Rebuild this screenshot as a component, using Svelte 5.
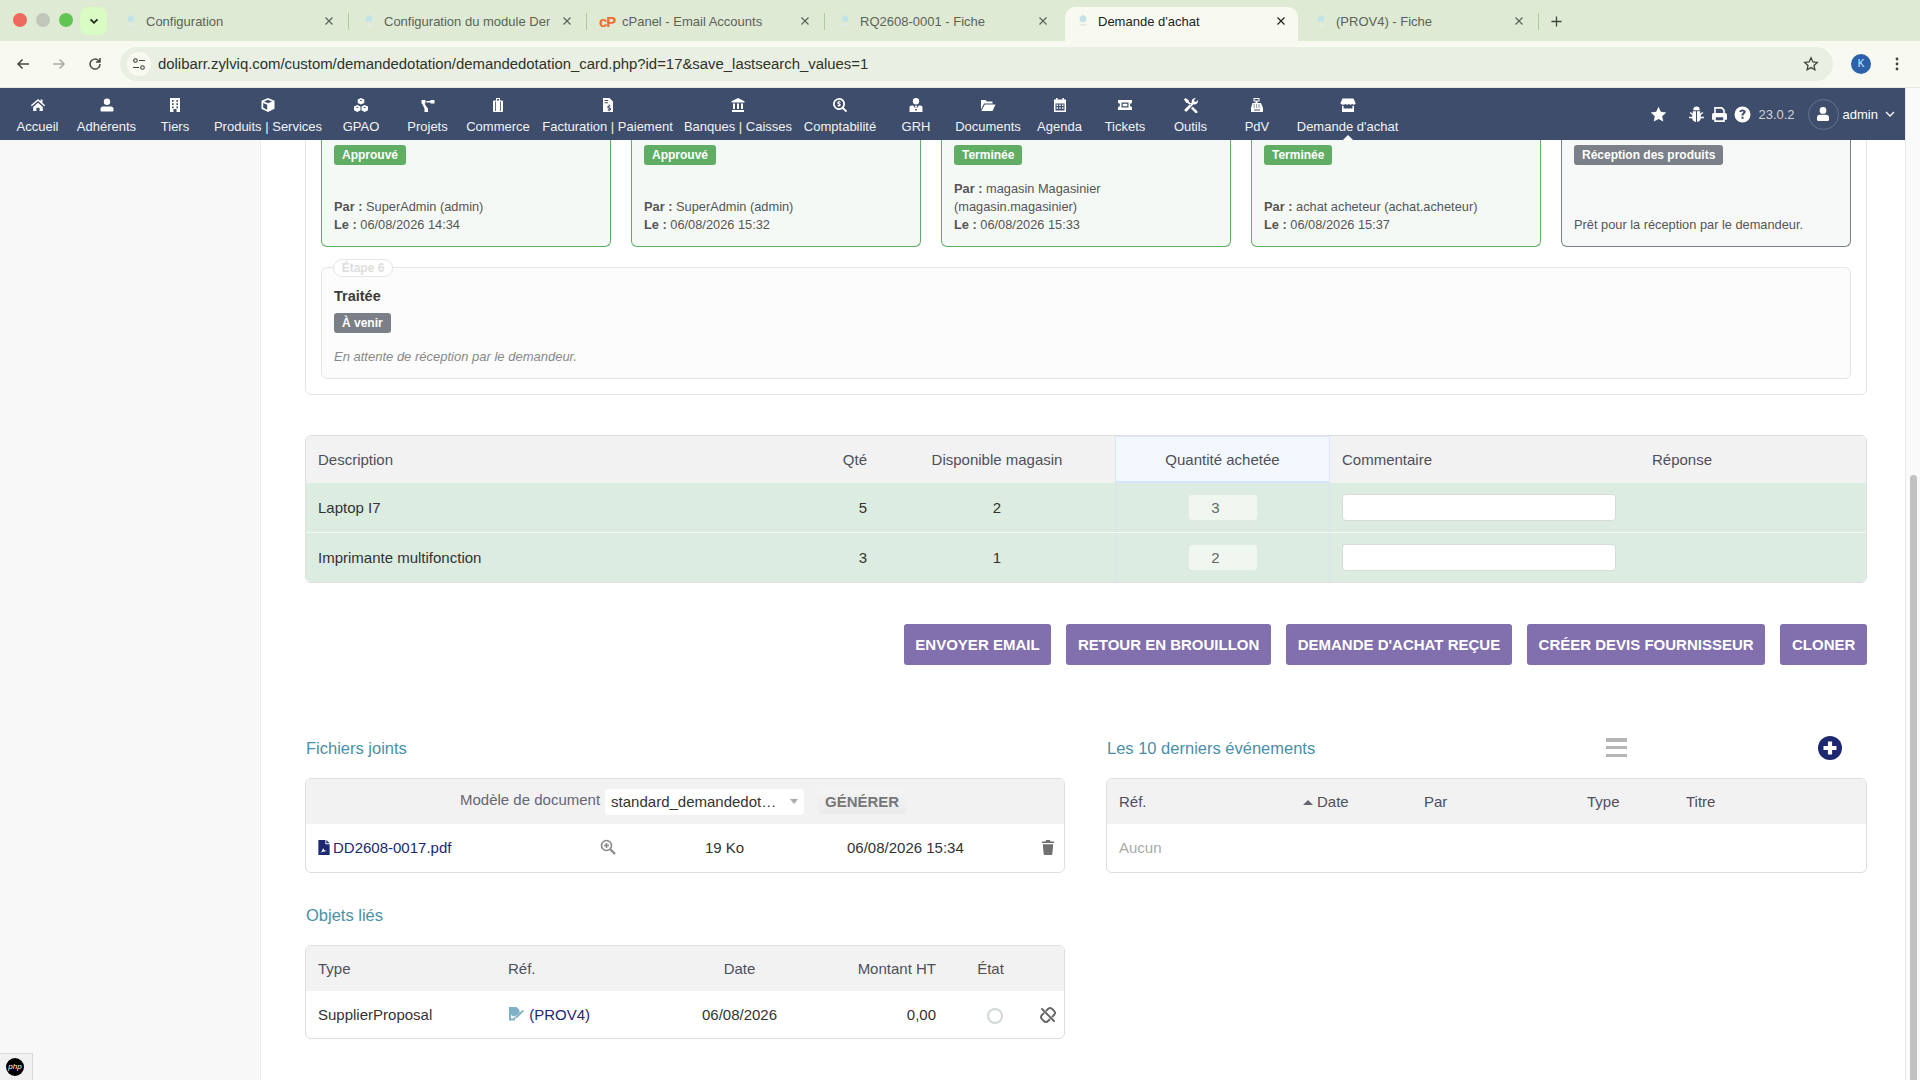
<script>
const tabs = [
    { title: 'Configuration' },
    { title: 'Configuration du module Dem' },
    { title: 'cPanel - Email Accounts', cp: true },
    { title: 'RQ2608-0001 - Fiche', nosep: true },
    { title: "Demande d'achat", active: true, nosep: true },
    { title: '(PROV4) - Fiche' }
];

const menu = [
    { label: 'Accueil', d: 'M8 2 .8 8.200l1 1.100L8 4l6.200 5.300 1-1.100-2.700-2.300V2.600h-2v1.600zM3.200 9.900 8 5.700l4.800 4.200V14H9.600v-3.200H6.400V14H3.200z' },
    { label: 'Adhérents', d: 'M8 1.600a3.200 3.200 0 1 1 0 6.400 3.200 3.200 0 0 1 0-6.400zM3.800 9.400h8.400c1.300 0 2.300 1 2.300 2.300v1.800c0 .5-.4.900-.9.900H2.400a.9.900 0 0 1-.9-.9v-1.800c0-1.300 1-2.300 2.300-2.300z' },
    { label: 'Tiers', d: 'M3 1h10v14H9.500v-3h-3v3H3zM5 3v1.800h1.600V3zm4.400 0v1.800H11V3zM5 6.200V8h1.600V6.200zm4.400 0V8H11V6.200zM5 9.400v1.800h1.600V9.400zm4.400 0v1.800H11V9.400z' },
    { label: 'Produits | Services', d: 'M8 1l6.500 2.800v8L8 15l-6.500-3.200v-8zM8 2.800 4 4.500 8 6.200l4-1.700zM3.200 6v4.800l4 2V7.700z' },
    { label: 'GPAO', d: 'M8 1l3.300 1.500v3.600L8 7.600 4.700 6.100V2.500zM4.300 8 7.500 9.500v3.700L4.300 15 1 13.200V9.500zm7.400 0L15 9.500v3.700L11.700 15l-3.200-1.800V9.500zM8 2.700 6.500 3.400 8 4.100l1.500-.7zM4.300 9.700l-1.500.7 1.500.7 1.500-.7zm7.400 0-1.500.7 1.500.7 1.500-.7z' },
    { label: 'Projets', d: 'M1.500 3h4v3.500h-1l2.800 4.500h.7V15h-3.500v-3.500l-2.500-5h-.5zM10.500 3h4v3.500h-4V5.500h-4V4h4z' },
    { label: 'Commerce', d: 'M6 1h4v2.500h2.200c.5 0 .8.300.8.800v9.900c0 .5-.3.800-.8.800H3.800c-.5 0-.8-.3-.8-.8V4.300c0-.5.3-.8.8-.8H6zm1 1v1.500h2V2zM5 4.500V14h.8V4.500zm5.200 0V14h.8V4.500z' },
    { label: 'Facturation | Paiement', d: 'M3 1h6.500L13 4.500V15H3zm1.500 2v1H8V3zm0 2.200v1H8v-1zM8.800 7.500v1c-1 .2-1.500.8-1.500 1.600 0 1.700 2.500 1.300 2.500 2 0 .4-.9.4-2 0v1.200c.3.100.6.200 1 .2v.8h.9v-.9c.9-.2 1.400-.8 1.400-1.500 0-1.800-2.500-1.300-2.500-2 0-.4.800-.4 1.800-.1V8.700c-.2-.1-.5-.2-.7-.2v-1z' },
    { label: 'Banques | Caisses', d: 'M8 1l6.500 3.200v1.300h-13V4.200zM3 6.500h2V12H3zm4 0h2V12H7zm4 0h2V12h-2zM2 13h12v2H2z' },
    { label: 'Comptabilité', d: 'M7 1a6 6 0 0 1 4.800 9.600l3.400 3.400-1.300 1.300-3.400-3.400A6 6 0 1 1 7 1zm0 1.800a4.200 4.200 0 1 0 0 8.400 4.200 4.200 0 0 0 0-8.400zM6.500 3.800h1v.8c.4 0 .8.100 1.100.3v1c-.7-.4-1.800-.5-1.800 0s2 .3 2 1.800c0 .7-.5 1.200-1.300 1.300v.8h-1V9c-.4 0-.8-.2-1.100-.3v-1c.8.400 1.900.500 1.900 0s-2-.4-2-1.800c0-.7.500-1.200 1.200-1.300z' },
    { label: 'GRH', d: 'M8 1a3.200 3.200 0 1 1 0 6.400A3.200 3.200 0 0 1 8 1zM3.500 8.500h1.800L8 12.500l2.700-4h1.800c1.200 0 2 .9 2 2V15h-13v-4.500c0-1.100.8-2 2-2zM7.300 8.600h1.400l.3 1-.5.800.5 2L8 14l-1-1.600.5-2-.5-.8z' },
    { label: 'Documents', d: 'M1 3h4.500L7 4.500h5.500V6.500H4L1 12.500zm3.800 4.500H15.500L12.500 14H1.300z' },
    { label: 'Agenda', d: 'M4 1h1.600v1.500h4.800V1H12v1.500h2V15H2V2.500h2zM3.500 6.500v7h9v-7zM4.500 7.500h1.500V9H4.500zm2.700 0h1.500V9H7.200zm2.800 0h1.500V9H10zM4.500 10.300h1.500v1.500H4.500zm2.700 0h1.500v1.500H7.200zm2.800 0h1.500v1.500H10z' },
    { label: 'Tickets', d: 'M1 3h14v3a2 2 0 0 0 0 4v3H1v-3a2 2 0 0 0 0-4zm3.500 2.500v5h7v-5zm1.200 1.200h4.600v2.600H5.700z' },
    { label: 'Outils', d: 'M2.500 1l3.400 2.400v1.300l2.300 2.300L7 8.200 4.700 5.900H3.400L1 2.500zM12 1a3.200 3.200 0 0 1 .9.100L11 3l.5 1.500L13 5l1.900-1.900A3.500 3.500 0 0 1 10.500 7.300l-6.300 6.800a1.500 1.500 0 0 1-2.200-2.200L8.800 5.500A3.500 3.500 0 0 1 12 1zM9.800 9.700l4.500 4.500a1.300 1.300 0 0 1-1.800 1.800L8 11.400z' },
    { label: 'PdV', d: 'M4.500 1h6v3.500h-2v1.500H12l2 5v4H2v-4l1.500-5h3V4.500h-2zM5.500 2v1.500h4V2zM4.500 7.500v1h1.200v-1zm2.500 0v1h1.200v-1zm2.500 0v1h1.200v-1zM4.500 9.500v1h1.200v-1zm2.500 0v1h1.200v-1zm2.500 0v1h1.200v-1zM5 12.500v1h6v-1z' },
    { label: "Demande d'achat", d: 'M2.500 1.500h11L15.500 6c0 1-.8 1.700-1.700 1.700-.7 0-1.300-.3-1.600-.9-.4.600-1 .9-1.700.9s-1.300-.3-1.700-.9c-.4.600-1 .9-1.700.9s-1.300-.3-1.700-.9c-.3.600-.9.900-1.600.9C1.300 7.700.5 7 .5 6zM2 8.800c.5.200 1.200.2 1.600 0V11.500h8.800V8.800c.4.200 1.100.2 1.600 0V15H2z' }
];

const steps = [
    { badge: 'Approuvé', lines: [['Par :', 'SuperAdmin (admin)'], ['Le :', '06/08/2026 14:34']] },
    { badge: 'Approuvé', lines: [['Par :', 'SuperAdmin (admin)'], ['Le :', '06/08/2026 15:32']] },
    { badge: 'Terminée', lines: [['Par :', 'magasin Magasinier (magasin.magasinier)'], ['Le :', '06/08/2026 15:33']] },
    { badge: 'Terminée', lines: [['Par :', 'achat acheteur (achat.acheteur)'], ['Le :', '06/08/2026 15:37']] },
    { badge: 'Réception des produits', pending: true, note: 'Prêt pour la réception par le demandeur.' }
];

const lines = [
    { name: 'Laptop I7', qty: 5, stock: 2, bought: 3 },
    { name: 'Imprimante multifonction', qty: 3, stock: 1, bought: 2 }
];

const actions = ['Envoyer email', 'Retour en brouillon', "Demande d'achat reçue", 'Créer devis fournisseur', 'Cloner'];
</script>

{#snippet favicon()}
    <svg class="favicon" viewBox="0 0 16 16"><circle cx="8" cy="5.500" r="4" fill="#c4e3e6"/><rect x="4" y="11" width="8" height="2.500" rx="1" fill="#e6ebe2"/></svg>
{/snippet}

<div class="window">
    <header class="tabstrip">
        <div class="lights">
            <span class="light red"></span>
            <span class="light grey"></span>
            <span class="light green"></span>
        </div>
        <button class="tabsearch" aria-label="Onglets">
            <svg viewBox="0 0 12 12" width="12" height="12"><path d="M2.500 4.300 6 7.800l3.500-3.500" fill="none" stroke="#1c2a16" stroke-width="1.800"/></svg>
        </button>
        {#each tabs as tab}
            <div class="tab" class:active={tab.active} class:sep={!tab.nosep}>
                {#if tab.cp}
                    <span class="cp">cP</span>
                {:else}
                    {@render favicon()}
                {/if}
                <span class="tab-title">{tab.title}</span>
                <svg class="tab-close" viewBox="0 0 10 10"><path d="M1.500 1.500l7 7m0-7-7 7" fill="none" stroke="currentColor" stroke-width="1.200"/></svg>
            </div>
        {/each}
        <svg class="newtab" viewBox="0 0 12 12"><path d="M6 .5v11M.5 6h11" fill="none" stroke="#3d473a" stroke-width="1.400"/></svg>
    </header>

    <div class="toolbar">
        <svg class="tool" viewBox="0 0 16 16"><path d="M14 8H3m4.500-4.500L3 8l4.500 4.500" fill="none" stroke="#444a42" stroke-width="1.500"/></svg>
        <svg class="tool" viewBox="0 0 16 16"><path d="M2 8h11M8.500 3.500 13 8l-4.500 4.500" fill="none" stroke="#a5aaa2" stroke-width="1.500"/></svg>
        <svg class="tool" viewBox="0 0 16 16"><path d="M13 8a5 5 0 1 1-1.500-3.500L13 6M13 2v4H9" fill="none" stroke="#444a42" stroke-width="1.500"/></svg>
        <div class="omnibox">
            <span class="site">
                <svg viewBox="0 0 14 14" width="14" height="14"><g fill="none" stroke="#3d473a" stroke-width="1.100"><circle cx="3.500" cy="3.500" r="1.800"/><circle cx="10.500" cy="10.500" r="1.800"/><path d="M7 3.500h6M1 10.500h6"/></g></svg>
            </span>
            <span class="url">dolibarr.zylviq.com/custom/demandedotation/demandedotation_card.php?id=17&amp;save_lastsearch_values=1</span>
            <svg class="star" viewBox="0 0 16 16"><path d="m8 1.800 1.900 4.100 4.400.5-3.300 3 .9 4.400L8 11.600l-3.900 2.200.9-4.400-3.300-3 4.400-.5z" fill="none" stroke="#3d473a" stroke-width="1.300"/></svg>
        </div>
        <span class="profile">K</span>
        <svg class="dots" viewBox="0 0 4 16"><circle cx="2" cy="3" r="1.400"/><circle cx="2" cy="8" r="1.400"/><circle cx="2" cy="13" r="1.400"/></svg>
    </div>

    <div class="viewport">
        <div class="app">
            <nav class="topnav">
                <div class="menu">
                    {#each menu as item, i}
                        <div class="menu-item" class:current={i === menu.length - 1}>
                            <svg viewBox="0 0 16 16"><path d={item.d} fill-rule="evenodd"/></svg>
                            <span>{item.label}</span>
                        </div>
                    {/each}
                </div>
                <div class="login">
                    <svg class="fav" viewBox="0 0 16 16"><path d="m8 .8 2.200 4.700 5.100.6-3.800 3.500 1 5.100L8 12.200l-4.500 2.500 1-5.100L.7 6.100l5.100-.6z"/></svg>
                    <svg class="bug" viewBox="0 0 16 16"><path d="M5 3.500a3 3 0 0 1 6 0v.5H5zM4.500 5h3v10c-2-.2-3.500-1.500-3.500-3.500H1v-1.300h3V8.500L1.600 6.600l.8-1 2.100 1.600zm4 0h3v2.200l2.100-1.600.8 1L12 8.500v1.700h3v1.300h-3c0 2-1.500 3.300-3.500 3.500z"/></svg>
                    <svg class="print" viewBox="0 0 16 16"><path fill-rule="evenodd" d="M3 1h7.500L13 3.500V6.500h.5c.8 0 1.500.7 1.500 1.500v5h-2v2H3v-2H1V8c0-.8.7-1.500 1.500-1.500H3zM4.500 2.500v4h7V4.200L10 2.500zM4.500 10.500V13.500h7v-3z"/></svg>
                    <svg class="help" viewBox="0 0 16 16"><path fill-rule="evenodd" d="M8 .5a7.500 7.500 0 1 1 0 15 7.500 7.500 0 0 1 0-15zM8 3.200c-1.800 0-2.900 1-3 2.500h2c.1-.5.400-.8 1-.8s.9.300.9.700c0 .9-1.900 1.100-1.900 3v.4h2v-.3c0-1 2-1.200 2-3.200 0-1.500-1.300-2.300-3-2.300zM7 10v2h2v-2z"/></svg>
                    <span class="version">23.0.2</span>
                    <span class="avatar">
                        <svg viewBox="0 0 16 16"><path d="M8 1a3.400 3.400 0 1 1 0 6.800A3.400 3.400 0 0 1 8 1zM4.500 8.800h7c1.400 0 2.500 1.100 2.500 2.500v2.500c0 .7-.5 1.200-1.200 1.200H3.200c-.7 0-1.200-.5-1.200-1.200v-2.500c0-1.400 1.100-2.500 2.500-2.500z"/></svg>
                    </span>
                    <span class="username">admin</span>
                    <svg class="userdrop" viewBox="0 0 10 10"><path d="M1 3l4 4 4-4" fill="none" stroke="#fff" stroke-width="1.300"/></svg>
                </div>
            </nav>

            <div class="page">
                <aside class="sidebar">
                    <div class="php"><span>php</span></div>
                </aside>
                <main class="content">
                    <section class="workflow">
                        <div class="steps">
                            {#each steps as step}
                                <div class="step" class:pending={step.pending}>
                                    <span class="badge" class:grey={step.pending}>{step.badge}</span>
                                    <div class="step-info">
                                        {#if step.note}
                                            <div>{step.note}</div>
                                        {:else}
                                            {#each step.lines as line}
                                                <div><strong>{line[0]}</strong> {line[1]}</div>
                                            {/each}
                                        {/if}
                                    </div>
                                </div>
                            {/each}
                        </div>
                        <div class="step-last">
                            <span class="step-num">Étape 6</span>
                            <h3>Traitée</h3>
                            <span class="badge grey">À venir</span>
                            <p>En attente de réception par le demandeur.</p>
                        </div>
                    </section>

                    <div class="table-box lines">
                        <table>
                            <colgroup>
                                <col style="width:488px" />
                                <col style="width:85px" />
                                <col style="width:236px" />
                                <col style="width:215px" />
                                <col style="width:310px" />
                                <col />
                            </colgroup>
                            <thead>
                                <tr>
                                    <th>Description</th>
                                    <th class="right">Qté</th>
                                    <th class="center">Disponible magasin</th>
                                    <th class="center bought">Quantité achetée</th>
                                    <th>Commentaire</th>
                                    <th>Réponse</th>
                                </tr>
                            </thead>
                            <tbody>
                                {#each lines as line}
                                    <tr>
                                        <td>{line.name}</td>
                                        <td class="right">{line.qty}</td>
                                        <td class="center">{line.stock}</td>
                                        <td class="center bought"><input class="qty-input" value={line.bought} readonly /></td>
                                        <td><input class="comment-input" /></td>
                                        <td></td>
                                    </tr>
                                {/each}
                            </tbody>
                        </table>
                    </div>

                    <div class="actions">
                        {#each actions as action}
                            <button class="action">{action}</button>
                        {/each}
                    </div>

                    <div class="columns">
                        <div>
                            <div class="block-title"><h2>Fichiers joints</h2></div>
                            <div class="table-box files">
                                <div class="files-head">
                                    <span class="model-label">Modèle de document</span>
                                    <div class="select">
                                        <span>standard_demandedot…</span>
                                        <i></i>
                                    </div>
                                    <button class="generate">GÉNÉRER</button>
                                </div>
                                <div class="files-row">
                                    <svg class="pdf" viewBox="0 0 12 16"><path fill-rule="evenodd" d="M0 0h7.500v4.500H12V16H0zM8.500 0 12 3.500H8.500zM2 13.500c1.500-.8 2.500-2.600 3-5 .8 2 1.800 3 4.500 3.200-2 .1-4.500.600-7.500 1.800z" fill="#1d2870"/></svg>
                                    <a class="link file-name" href="#top">DD2608-0017.pdf</a>
                                    <svg class="preview" viewBox="0 0 16 16"><g fill="none" stroke="#8a8a8a" stroke-width="1.600"><circle cx="6.500" cy="6.500" r="5"/><path d="M10.500 10.500 15 15" stroke-width="2.400"/><path d="M6.500 4v5M4 6.500h5"/></g></svg>
                                    <span class="size">19 Ko</span>
                                    <span class="file-date">06/08/2026 15:34</span>
                                    <svg class="trash" viewBox="0 0 14 16"><path d="M5 0h4l.7 1.500H13.500V3.300H.5V1.500h3.800zM1.500 4.500h11l-.8 10c0 .8-.6 1.500-1.400 1.500H3.700c-.8 0-1.400-.7-1.400-1.500z" fill="#707070"/></svg>
                                </div>
                            </div>

                            <div class="block-title linked"><h2>Objets liés</h2></div>
                            <div class="table-box">
                                <table>
                                    <colgroup>
                                        <col style="width:190px" />
                                        <col style="width:170px" />
                                        <col style="width:147px" />
                                        <col style="width:135px" />
                                        <col style="width:85px" />
                                        <col />
                                    </colgroup>
                                    <thead>
                                        <tr>
                                            <th>Type</th>
                                            <th>Réf.</th>
                                            <th class="center">Date</th>
                                            <th class="right">Montant HT</th>
                                            <th class="center">État</th>
                                            <th></th>
                                        </tr>
                                    </thead>
                                    <tbody>
                                        <tr class="plain">
                                            <td>SupplierProposal</td>
                                            <td>
                                                <svg class="proposal" viewBox="0 0 16 16"><path fill-rule="evenodd" d="M1 1h7.500l3 3v3L7.500 11l-.8 3.500H1zM3 8.500l1.500 2 1.500-1 1 1-2 2H3zM15 3.800l1 1.200-7 7-2.300.8.600-2.300z" fill="#7fb0c6"/></svg>
                                                <a class="link" href="#top">(PROV4)</a>
                                            </td>
                                            <td class="center">06/08/2026</td>
                                            <td class="right">0,00</td>
                                            <td class="center"><span class="status"></span></td>
                                            <td class="unlink-cell">
                                                <svg class="unlink" viewBox="0 0 16 16"><g fill="none" stroke="#666" stroke-width="1.900" stroke-linecap="round"><path d="M6.500 3.500 8 2a3 3 0 0 1 4.200 0l1.800 1.800a3 3 0 0 1 0 4.200L12.500 9.500"/><path d="M9.500 12.500 8 14a3 3 0 0 1-4.200 0L2 12.200A3 3 0 0 1 2 8l1.500-1.500"/><path d="M2 2l12 12"/></g></svg>
                                            </td>
                                        </tr>
                                    </tbody>
                                </table>
                            </div>
                        </div>

                        <div>
                            <div class="block-title">
                                <h2>Les 10 derniers événements</h2>
                                <span class="list-icon"><i></i><i></i><i></i></span>
                                <svg class="add" viewBox="0 0 24 24"><circle cx="12" cy="12" r="12" fill="#1d2870"/><path d="M12 5.500v13M5.500 12h13" stroke="#fff" stroke-width="4.200"/></svg>
                            </div>
                            <div class="table-box">
                                <table>
                                    <colgroup>
                                        <col style="width:184px" />
                                        <col style="width:121px" />
                                        <col style="width:163px" />
                                        <col style="width:99px" />
                                        <col />
                                    </colgroup>
                                    <thead>
                                        <tr>
                                            <th>Réf.</th>
                                            <th><span class="sort"></span>Date</th>
                                            <th>Par</th>
                                            <th>Type</th>
                                            <th>Titre</th>
                                        </tr>
                                    </thead>
                                    <tbody>
                                        <tr class="plain">
                                            <td class="none" colspan="5">Aucun</td>
                                        </tr>
                                    </tbody>
                                </table>
                            </div>
                        </div>
                    </div>
                </main>
            </div>
        </div>
        <div class="scrollbar"><div class="thumb"></div></div>
    </div>
</div>

<style>
:global(body) {
    margin: 0;
    overflow: hidden;
    font-family: "Liberation Sans", Arial, sans-serif;
}

.window {
    width: 1920px;
    height: 1080px;
    display: flex;
    flex-direction: column;
    overflow: hidden;
    background: #fff;
}

/* browser chrome */
.tabstrip {
    height: 41px;
    flex: none;
    display: flex;
    align-items: flex-end;
    padding-left: 13px;
    background: #dfead4;
    box-sizing: border-box;
}

.lights {
    display: flex;
    gap: 9px;
    align-self: flex-start;
    margin-top: 13px;
}

.light {
    width: 14px;
    height: 14px;
    border-radius: 50%;
}

.red { background: #ee6a5f; }
.grey { background: #c0c7ba; }
.green { background: #61c554; }

.tabsearch {
    width: 27px;
    height: 28px;
    margin: 0 6px 6px 7px;
    padding: 0;
    border: 0;
    border-radius: 8px;
    background: #d9fbc4;
    display: flex;
    align-items: center;
    justify-content: center;
}

.tab {
    position: relative;
    width: 233px;
    height: 34px;
    margin-right: 5px;
    padding: 0 12px 6px 11px;
    box-sizing: border-box;
    display: flex;
    align-items: center;
    font-size: 13px;
    color: #5b6358;
    border-radius: 10px 10px 0 0;
}

.tab.sep::after {
    content: "";
    position: absolute;
    right: -3px;
    top: 6px;
    height: 17px;
    width: 1px;
    background: #aecb9c;
}

.tab.active {
    background: #f8faf1;
    color: #20241e;
}

.favicon {
    width: 14px;
    height: 14px;
    flex: none;
    margin: 0 8px 0 0;
}

.cp {
    width: 22px;
    margin-left: -1px;
    margin-right: 1px;
    flex: none;
    color: #ee6c2e;
    font-weight: bold;
    font-size: 15px;
    letter-spacing: -1px;
}

.tab-title {
    flex: 1;
    min-width: 0;
    overflow: hidden;
    white-space: nowrap;
    margin-right: 12px;
}

.tab-close {
    width: 10px;
    height: 10px;
    flex: none;
}

.newtab {
    width: 11px;
    height: 11px;
    margin: 0 0 14px 10px;
}

.toolbar {
    height: 47px;
    flex: none;
    box-sizing: border-box;
    display: flex;
    align-items: center;
    padding: 0 0 1px 15px;
    background: #f8faf1;
    border-bottom: 1px solid #e6e9e0;
}

.tool {
    width: 16px;
    height: 16px;
    margin-right: 20px;
}

.omnibox {
    width: 1713px;
    height: 34px;
    margin-left: -3px;
    display: flex;
    align-items: center;
    background: #e9efe2;
    border-radius: 17px;
}

.site {
    width: 24px;
    height: 24px;
    margin: 0 7px 0 7px;
    border-radius: 50%;
    background: #f8faf1;
    display: flex;
    align-items: center;
    justify-content: center;
}

.url {
    flex: 1;
    font-size: 14.9px;
    color: #2e332c;
}

.star {
    width: 16px;
    height: 16px;
    margin-right: 14px;
}

.profile {
    width: 20px;
    height: 20px;
    margin-left: 18px;
    border-radius: 50%;
    background: #2d62a8;
    color: #dfe8f5;
    font-size: 10px;
    line-height: 20px;
    text-align: center;
}

.dots {
    width: 4px;
    height: 16px;
    margin-left: 24px;
    fill: #3d473a;
}

/* dolibarr */
.viewport {
    flex: 1;
    min-height: 0;
    display: flex;
}

.app {
    width: 1905px;
    display: flex;
    flex-direction: column;
}

.scrollbar {
    flex: 1;
    position: relative;
    background: #fafafa;
    border-left: 1px solid #e9e9e9;
}

.thumb {
    position: absolute;
    left: 4px;
    right: 3px;
    top: 387px;
    bottom: 0;
    border-radius: 4px 4px 0 0;
    background: #c2c2c2;
}

.topnav {
    height: 52px;
    flex: none;
    display: flex;
    justify-content: space-between;
    background: #3e4d6b;
    color: #fff;
}

.menu {
    display: grid;
    grid-template-columns: 59px 79px 58px 128px 58px 75px 66px 153px 108px 96px 56px 88px 55px 76px 55px 78px 103px;
    padding-left: 8px;
}

.menu-item {
    position: relative;
    display: flex;
    flex-direction: column;
    align-items: center;
    font-size: 13px;
    white-space: nowrap;
    padding-top: 9px;
    color: #f2f3f6;
}

.menu-item svg {
    width: 16px;
    height: 16px;
    fill: #fff;
    margin-bottom: 6px;
}

.menu-item.current::after {
    content: "";
    position: absolute;
    left: 50%;
    bottom: 0;
    margin-left: -5px;
    border: 5px solid transparent;
    border-top: 0;
    border-bottom-color: #fff;
}

.login {
    display: flex;
    align-items: center;
    padding: 0 10px 0 0;
    fill: #fff;
    font-size: 13px;
}

.login svg {
    flex: none;
}

.fav { width: 17px; height: 17px; margin-right: 21px; }
.bug { width: 17px; height: 17px; margin-right: 6px; }
.print { width: 17px; height: 17px; margin-right: 6px; }
.help { width: 17px; height: 17px; margin-right: 7px; }

.version {
    color: #cfd3dc;
    margin-right: 13px;
}

.avatar {
    width: 31px;
    height: 31px;
    box-sizing: border-box;
    border: 1px solid #66738e;
    border-radius: 50%;
    display: flex;
    align-items: center;
    justify-content: center;
    margin-right: 4px;
}

.avatar svg {
    width: 16px;
    height: 16px;
}

.username {
    margin-right: 7px;
}

.userdrop {
    width: 10px;
    height: 10px;
}

.page {
    flex: 1;
    min-height: 0;
    display: flex;
}

.sidebar {
    position: relative;
    width: 260px;
    flex: none;
    background: #f8f8f8;
    border-right: 1px solid #eeeeee;
}

.php {
    position: absolute;
    left: 0;
    bottom: 0;
    width: 32px;
    height: 26px;
    background: #f1f1f1;
    border-top: 1px solid #d8d8d8;
    border-right: 1px solid #d8d8d8;
    display: flex;
    align-items: center;
    justify-content: center;
}

.php span {
    width: 18px;
    height: 18px;
    margin-left: -2px;
    border-radius: 50%;
    background: #000;
    color: #fff;
    font-size: 8px;
    font-style: italic;
    line-height: 17px;
    text-align: center;
}

.content {
    flex: 1;
    min-width: 0;
    overflow: hidden;
    padding: 0 38px 0 44px;
}

.workflow {
    margin-top: -12px;
    padding: 0 15px 15px 15px;
    border: 1px solid #e4e4e4;
    border-radius: 0 0 6px 6px;
    height: 267px;
    box-sizing: border-box;
}

.steps {
    display: grid;
    grid-template-columns: repeat(5, 290px);
    gap: 20px;
    height: 118px;
}

.step {
    box-sizing: border-box;
    padding: 16px 12px 12px 12px;
    display: flex;
    flex-direction: column;
    align-items: flex-start;
    justify-content: space-between;
    background: #f5f9f5;
    border: 1px solid #5fae63;
    border-top: 0;
    border-radius: 0 0 6px 6px;
    font-size: 12.8px;
    line-height: 18px;
    color: #555;
}

.step.pending {
    background: #f7f9f8;
    border-color: #7b7f87;
}

.badge {
    display: inline-block;
    height: 20px;
    padding: 0 8px;
    border-radius: 3px;
    background: #5fae63;
    color: #fff;
    font-size: 12px;
    font-weight: bold;
    line-height: 20px;
}

.badge.grey {
    background: #7b7f87;
}

.step-last {
    position: relative;
    height: 112px;
    box-sizing: border-box;
    margin-top: 20px;
    padding: 19px 12px 0;
    background: #fcfcfc;
    border: 1px solid #e6e6e6;
    border-radius: 6px;
}

.step-num {
    position: absolute;
    left: 11px;
    top: -9px;
    width: 60px;
    height: 18px;
    box-sizing: border-box;
    border: 1px solid #e6e6e6;
    border-radius: 9px;
    background: #fff;
    color: #dddddd;
    font-size: 12px;
    font-weight: bold;
    line-height: 16px;
    text-align: center;
}

.step-last h3 {
    margin: 0 0 8px;
    font-size: 14.500px;
    line-height: 18px;
    color: #3a3a3a;
}

.step-last .badge {
    display: block;
    width: fit-content;
}

.step-last p {
    margin: 16px 0 0;
    font-size: 13px;
    font-style: italic;
    color: #888;
}

.table-box {
    border: 1px solid #dedede;
    border-radius: 6px;
    overflow: hidden;
    box-sizing: border-box;
}

table {
    width: 100%;
    table-layout: fixed;
    border-collapse: separate;
    border-spacing: 0;
    font-size: 15px;
}

th, td {
    box-sizing: border-box;
}

th {
    height: 45px;
    padding: 0 12px;
    background: #f2f2f2;
    color: #4f4f5c;
    font-weight: normal;
    text-align: left;
}

td {
    height: 47px;
    padding: 0 12px;
    color: #333;
}

.center { text-align: center; }
.right { text-align: right; }

.lines {
    margin-top: 40px;
}

.lines th {
    height: 47px;
}

.lines td {
    height: 50px;
    background: #dcece0;
    border-top: 1px solid #f3f8f4;
}

.lines tbody tr:first-child td {
    height: 49px;
    border-top: 0;
}

.lines th.bought {
    background: #f3f8ff;
    border: 1px solid #dbe7f8;
    border-bottom: 2px solid #d5e4f8;
}

.lines td.bought {
    border-left: 1px solid #d5e4f8;
    border-right: 1px solid #d5e4f8;
}

input {
    box-sizing: border-box;
    height: 27px;
    font: inherit;
    color: #666;
    border-radius: 4px;
    display: block;
}

.qty-input {
    width: 70px;
    margin: 0 auto;
    padding: 0 14px 0 0;
    text-align: center;
    background: #eff7f0;
    border: 1px solid #e1ebe3;
}

.comment-input {
    width: 274px;
    background: #fff;
    border: 1px solid #d8dcd9;
}

.actions {
    display: flex;
    justify-content: flex-end;
    gap: 15px;
    margin-top: 41px;
}

.action {
    height: 41px;
    padding: 0 11.7px;
    border: 0;
    border-radius: 3px;
    background: #8170ad;
    color: #fff;
    font: bold 15px "Liberation Sans", Arial, sans-serif;
    text-transform: uppercase;
}

.columns {
    display: grid;
    grid-template-columns: 760px 761px;
    gap: 41px;
}

.block-title {
    height: 113px;
    box-sizing: border-box;
    padding-bottom: 19px;
    display: flex;
    align-items: flex-end;
    position: relative;
}

.block-title h2 {
    margin: 0 0 0 1px;
    font-size: 16.500px;
    font-weight: normal;
    line-height: 22px;
    color: #4a8fa8;
}

.block-title.linked {
    height: 72px;
    padding-bottom: 19px;
}

.list-icon {
    position: absolute;
    left: 500px;
    bottom: 21px;
    width: 21px;
    height: 19px;
    display: flex;
    flex-direction: column;
    justify-content: space-between;
}

.list-icon i {
    height: 3.500px;
    background: #b5b5b5;
}

.add {
    position: absolute;
    right: 25px;
    bottom: 18px;
    width: 24px;
    height: 24px;
}

.files-head {
    height: 45px;
    display: flex;
    align-items: center;
    padding-left: 154px;
    background: #f2f2f2;
    font-size: 15px;
    color: #666673;
}

.model-label {
    margin-bottom: 5px;
}

.select {
    width: 199px;
    height: 26px;
    box-sizing: border-box;
    margin: 0 14px 0 5px;
    padding: 0 6px;
    display: flex;
    align-items: center;
    justify-content: space-between;
    background: #fff;
    border-radius: 4px;
    color: #333;
}

.select i {
    border: 4px solid transparent;
    border-top: 5px solid #aaa;
    border-bottom: 0;
}

.generate {
    width: 88px;
    height: 25px;
    padding: 0;
    border: 0;
    border-radius: 3px;
    background: linear-gradient(#f4f4f4, #ebebeb);
    color: #777;
    font: bold 15px "Liberation Sans", Arial, sans-serif;
}

.files-row {
    height: 48px;
    box-sizing: border-box;
    padding: 0 0 2px 12px;
    display: flex;
    align-items: center;
    font-size: 15px;
    color: #333;
    position: relative;
}

.pdf {
    width: 12px;
    height: 15px;
    margin-right: 3px;
}

.link {
    color: #1d2870;
    text-decoration: none;
}

.preview {
    position: absolute;
    left: 294px;
    width: 16px;
    height: 16px;
}

.size {
    position: absolute;
    left: 399px;
}

.file-date {
    position: absolute;
    left: 541px;
}

.trash {
    position: absolute;
    left: 735px;
    width: 14px;
    height: 15px;
}

.proposal {
    width: 16px;
    height: 16px;
    vertical-align: -2px;
    margin-right: 1px;
}

.status {
    display: inline-block;
    width: 16px;
    height: 16px;
    margin-left: 9px;
    box-sizing: border-box;
    border: 2px solid #d3d9d8;
    border-radius: 50%;
    vertical-align: middle;
}

.unlink-cell {
    padding: 0;
}

.unlink {
    display: block;
    width: 16px;
    height: 16px;
    margin-left: 7px;
}

.sort {
    display: inline-block;
    margin: 0 4px 2px 0;
    border: 5px solid transparent;
    border-top: 0;
    border-bottom: 5px solid #666673;
}

.none {
    height: 48px;
    padding-bottom: 2px;
    color: #aaa;
}
</style>
